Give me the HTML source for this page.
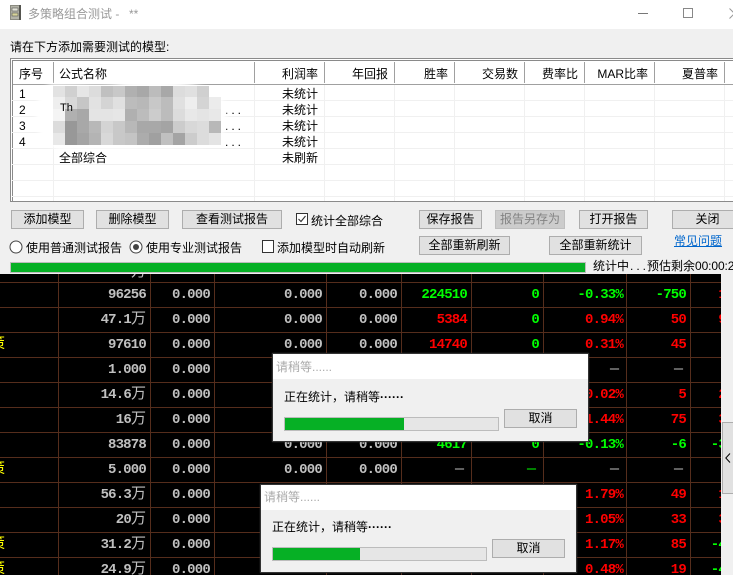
<!DOCTYPE html>
<html lang="zh">
<head>
<meta charset="utf-8">
<title>多策略组合测试</title>
<style>
html,body{margin:0;padding:0;width:733px;height:575px;overflow:hidden;background:#f0f0f0;}
body{position:relative;font-family:"Liberation Sans","WenQuanYi Zen Hei","Noto Sans CJK SC",sans-serif;font-size:12px;color:#000;}
.a{position:absolute;}
.t{position:absolute;white-space:nowrap;line-height:16px;height:16px;}
.b{position:absolute;box-sizing:border-box;height:19px;background:#e1e1e1;border:1px solid #adadad;text-align:center;line-height:17px;white-space:nowrap;overflow:hidden;}
#black{position:absolute;left:0;top:274px;width:721px;height:301px;background:#000;overflow:hidden;}
.v{position:absolute;top:0;width:1px;height:301px;background:#552d1c;}
.h{position:absolute;left:0;width:721px;height:1px;background:#552d1c;}
.r{position:absolute;left:0;width:733px;height:20px;margin-top:1px;font:bold 14px/20px "Liberation Mono","WenQuanYi Zen Hei",monospace;letter-spacing:-.8px;color:#c0c0c0;}
.r span{position:absolute;top:0;white-space:nowrap;}
.r i{font:normal 15px/0 "WenQuanYi Zen Hei","Noto Sans CJK SC",sans-serif;letter-spacing:0;}
.r .n{font-weight:normal;letter-spacing:0;font-size:15px;}
.c1{right:587px}.c2{right:523px}.c3{right:411px}.c4{right:336px}.c5{right:266px}.c6{right:194px}.c7{right:110px}.c8{right:47px}.c9{right:7px}
.g{color:#00ff00}.d{color:#ff0000}
.hd{position:absolute;top:66px;white-space:nowrap;line-height:16px;text-align:right;}
.sep{position:absolute;top:62px;height:21px;width:1px;background:#a0a0a0;}
.cl{position:absolute;top:85px;height:116px;width:1px;background:#f0f0f0;}
.rl{position:absolute;left:12px;width:721px;height:1px;background:#f0f0f0;}
.dlg{position:absolute;box-sizing:border-box;width:317px;height:89px;border:1px solid #333;background:#f0f0f0;box-shadow:0 0 1px #444;}
.dlg .tb{position:absolute;left:0;top:0;width:315px;height:25px;background:#fff;}
.pb{position:absolute;box-sizing:border-box;width:215px;height:14px;background:#e6e6e6;border:1px solid #bcbcbc;}
.pb div{height:12px;background:#06b025;}
</style>
</head>
<body>

<div id="black">
  <div class="v" style="left:58px"></div>
  <div class="v" style="left:150px"></div>
  <div class="v" style="left:214px"></div>
  <div class="v" style="left:326px"></div>
  <div class="v" style="left:401px"></div>
  <div class="v" style="left:471px"></div>
  <div class="v" style="left:543px"></div>
  <div class="v" style="left:626px"></div>
  <div class="v" style="left:690px"></div>
  <div class="h" style="top:8px"></div>
  <div class="h" style="top:33px"></div>
  <div class="h" style="top:58px"></div>
  <div class="h" style="top:83px"></div>
  <div class="h" style="top:108px"></div>
  <div class="h" style="top:133px"></div>
  <div class="h" style="top:158px"></div>
  <div class="h" style="top:183px"></div>
  <div class="h" style="top:208px"></div>
  <div class="h" style="top:233px"></div>
  <div class="h" style="top:258px"></div>
  <div class="h" style="top:283px"></div>

  <div class="r" style="top:-12px"><span class="c1"><i>万</i></span></div>
  <div class="r" style="top:10px"><span class="c1">96256</span><span class="c2">0.000</span><span class="c3">0.000</span><span class="c4">0.000</span><span class="c5 g">224510</span><span class="c6 g">0</span><span class="c7 g">-0.33%</span><span class="c8 g">-750</span><span class="c9 d">1</span></div>
  <div class="r" style="top:35px"><span class="c1">47.1<i>万</i></span><span class="c2">0.000</span><span class="c3">0.000</span><span class="c4">0.000</span><span class="c5 d">5384</span><span class="c6 g">0</span><span class="c7 d">0.94%</span><span class="c8 d">50</span><span class="c9 d">9</span></div>
  <div class="r" style="top:60px"><span style="left:-10px;color:#ff0"><i>策</i></span><span class="c1">97610</span><span class="c2">0.000</span><span class="c3">0.000</span><span class="c4">0.000</span><span class="c5 d">14740</span><span class="c6 g">0</span><span class="c7 d">0.31%</span><span class="c8 d">45</span></div>
  <div class="r" style="top:85px"><span class="c1">1.000</span><span class="c2">0.000</span><span class="c3">0.000</span><span class="n" style="right:114px">—</span><span class="n" style="right:50px">—</span></div>
  <div class="r" style="top:110px"><span class="c1">14.6<i>万</i></span><span class="c2">0.000</span><span class="c3">0.000</span><span class="c7 d">0.02%</span><span class="c8 d">5</span><span class="c9 d">2</span></div>
  <div class="r" style="top:135px"><span class="c1">16<i>万</i></span><span class="c2">0.000</span><span class="c3">0.000</span><span class="c7 d">1.44%</span><span class="c8 d">75</span><span class="c9 d">3</span></div>
  <div class="r" style="top:160px"><span class="c1">83878</span><span class="c2">0.000</span><span class="c3">0.000</span><span class="c4">0.000</span><span class="c5 g">4617</span><span class="c6 g">0</span><span class="c7 g">-0.13%</span><span class="c8 g">-6</span><span class="c9 g">-3</span></div>
  <div class="r" style="top:185px"><span style="left:-10px;color:#ff0"><i>策</i></span><span class="c1">5.000</span><span class="c2">0.000</span><span class="c3">0.000</span><span class="c4">0.000</span><span class="n" style="right:269px">—</span><span class="n g" style="right:197px">—</span><span class="n" style="right:114px">—</span><span class="n" style="right:50px">—</span></div>
  <div class="r" style="top:210px"><span class="c1">56.3<i>万</i></span><span class="c2">0.000</span><span class="c3">0.000</span><span class="c7 d">1.79%</span><span class="c8 d">49</span><span class="c9 d">1</span></div>
  <div class="r" style="top:235px"><span class="c1">20<i>万</i></span><span class="c2">0.000</span><span class="c3">0.000</span><span class="c7 d">1.05%</span><span class="c8 d">33</span><span class="c9 d">3</span></div>
  <div class="r" style="top:260px"><span style="left:-10px;color:#ff0"><i>策</i></span><span class="c1">31.2<i>万</i></span><span class="c2">0.000</span><span class="c3">0.000</span><span class="c7 d">1.17%</span><span class="c8 d">85</span><span class="c9 g">-4</span></div>
  <div class="r" style="top:285px"><span style="left:-10px;color:#ff0"><i>策</i></span><span class="c1">24.9<i>万</i></span><span class="c2">0.000</span><span class="c3">0.000</span><span class="c4">0.000</span><span class="c5 d">4884</span><span class="c6 g">0</span><span class="c7 d">0.48%</span><span class="c8 d">19</span><span class="c9 g">-4</span></div>
</div>

<!-- collapse handle -->
<div class="a" style="left:722px;top:422px;width:11px;height:72px;box-sizing:border-box;background:#e1e1e1;border:1px solid #adadad;border-right:0;"></div>
<svg class="a" style="left:725px;top:453px" width="6" height="10" viewBox="0 0 6 10"><path d="M5 .5L.8 5 5 9.5" fill="none" stroke="#000" stroke-width="1"/></svg>

<!-- main window -->
<div class="a" style="left:0;top:0;width:733px;height:274px;background:#f0f0f0;"></div>
<div class="a" style="left:0;top:0;width:733px;height:29px;background:#fff;"></div>

<svg class="a" style="left:9px;top:5px" width="13" height="15" viewBox="0 0 13 15">
  <rect x="1" y="0" width="11" height="15" fill="#8a8a80"/>
  <rect x="2" y="1" width="8" height="13" fill="#b4b4a8"/>
  <rect x="3" y="3" width="6" height="3" fill="#e4e4d8" stroke="#555" stroke-width=".6"/>
  <rect x="3" y="8" width="6" height="3" fill="#d8d49a" stroke="#555" stroke-width=".6"/>
  <rect x="10" y="0" width="2" height="15" fill="#55554f"/>
</svg>
<div class="t" style="left:28px;top:6px;color:#999">多策略组合测试 -</div>
<div class="t" style="left:129px;top:6px;color:#999">**</div>

<div class="a" style="left:638px;top:13px;width:10px;height:1px;background:#777"></div>
<div class="a" style="left:683px;top:8px;width:10px;height:10px;box-sizing:border-box;border:1px solid #888;"></div>
<svg class="a" style="left:729px;top:8px" width="4" height="11" viewBox="0 0 4 11"><path d="M.5 .5L5.5 5.5M.5 10.5L5.5 5.5" fill="none" stroke="#999" stroke-width="1"/></svg>

<div class="t" style="left:10px;top:39px">请在下方添加需要测试的模型:</div>

<!-- list frame -->
<div class="a" style="left:10px;top:58px;width:723px;height:144px;box-sizing:border-box;border:1px solid #8a8a8a;border-right:0;background:#fff;"></div>
<div class="a" style="left:12px;top:60px;width:721px;height:1px;background:#8a8a8a;"></div>
<div class="a" style="left:12px;top:60px;width:1px;height:141px;background:#8a8a8a;"></div>
<div class="a" style="left:13px;top:84px;width:720px;height:1px;background:#a0a0a0;"></div>

<div class="sep" style="left:53px"></div>
<div class="sep" style="left:254px"></div>
<div class="sep" style="left:324px"></div>
<div class="sep" style="left:394px"></div>
<div class="sep" style="left:454px"></div>
<div class="sep" style="left:524px"></div>
<div class="sep" style="left:584px"></div>
<div class="sep" style="left:654px"></div>
<div class="sep" style="left:724px"></div>

<div class="cl" style="left:53px"></div>
<div class="cl" style="left:254px"></div>
<div class="cl" style="left:324px"></div>
<div class="cl" style="left:394px"></div>
<div class="cl" style="left:454px"></div>
<div class="cl" style="left:524px"></div>
<div class="cl" style="left:584px"></div>
<div class="cl" style="left:654px"></div>
<div class="cl" style="left:724px"></div>

<div class="rl" style="top:100px"></div>
<div class="rl" style="top:116px"></div>
<div class="rl" style="top:132px"></div>
<div class="rl" style="top:148px"></div>
<div class="rl" style="top:164px"></div>
<div class="rl" style="top:180px"></div>
<div class="rl" style="top:196px"></div>

<div class="hd" style="left:19px">序号</div>
<div class="hd" style="left:59px">公式名称</div>
<div class="hd" style="right:415px">利润率</div>
<div class="hd" style="right:345px">年回报</div>
<div class="hd" style="right:285px">胜率</div>
<div class="hd" style="right:215px">交易数</div>
<div class="hd" style="right:155px">费率比</div>
<div class="hd" style="right:85px">MAR比率</div>
<div class="hd" style="right:15px">夏普率</div>

<div class="t" style="left:19px;top:86px">1</div>
<div class="t" style="left:19px;top:102px">2</div>
<div class="t" style="left:19px;top:118px">3</div>
<div class="t" style="left:19px;top:134px">4</div>
<div class="t" style="left:225px;top:102px;letter-spacing:3px">...</div>
<div class="t" style="left:225px;top:118px;letter-spacing:3px">...</div>
<div class="t" style="left:225px;top:134px;letter-spacing:3px">...</div>
<div class="t" style="left:59px;top:150px">全部综合</div>
<div class="t" style="left:282px;top:86px">未统计</div>
<div class="t" style="left:282px;top:102px">未统计</div>
<div class="t" style="left:282px;top:118px">未统计</div>
<div class="t" style="left:282px;top:134px">未统计</div>
<div class="t" style="left:282px;top:150px">未刷新</div>

<!-- mosaic -->
<svg class="a" style="left:28px;top:72px" width="207" height="85" viewBox="28 72 207 85">
  <defs><filter id="bl" x="-20%" y="-40%" width="140%" height="180%"><feGaussianBlur stdDeviation="2"/></filter></defs>
  <path d="M52 84C90 84 100 88 125 82C160 78 190 82 205 88C220 92 226 100 226 118C226 134 220 146 190 147C150 149 100 148 70 150C50 151 38 140 36 120C35 100 42 86 52 84Z" fill="#fff" filter="url(#bl)"/>
  <g shape-rendering="crispEdges">
    <rect x="53" y="86" width="12" height="11" fill="#e2e2e2"/><rect x="65" y="86" width="12" height="11" fill="#d0d0d0"/><rect x="77" y="86" width="12" height="11" fill="#e6e6e6"/><rect x="89" y="86" width="12" height="11" fill="#dcdcdc"/><rect x="101" y="86" width="12" height="11" fill="#c0c0c0"/><rect x="113" y="86" width="12" height="11" fill="#c8c8c8"/><rect x="125" y="86" width="12" height="11" fill="#b0b0b0"/><rect x="137" y="86" width="12" height="11" fill="#a8a8a8"/><rect x="149" y="86" width="12" height="11" fill="#bcbcbc"/><rect x="161" y="86" width="12" height="11" fill="#a8a8a8"/><rect x="173" y="86" width="12" height="11" fill="#dcdcdc"/><rect x="185" y="86" width="12" height="11" fill="#e0e0e0"/><rect x="197" y="86" width="12" height="11" fill="#d0d0d0"/>
    <rect x="53" y="97" width="12" height="12" fill="#eeeeee"/><rect x="65" y="97" width="12" height="12" fill="#d8d8d8"/><rect x="77" y="97" width="12" height="12" fill="#c6c6c6"/><rect x="89" y="97" width="12" height="12" fill="#e2e2e2"/><rect x="101" y="97" width="12" height="12" fill="#d4d4d4"/><rect x="113" y="97" width="12" height="12" fill="#e0e0e0"/><rect x="125" y="97" width="12" height="12" fill="#bcbcbc"/><rect x="137" y="97" width="12" height="12" fill="#b8b8b8"/><rect x="149" y="97" width="12" height="12" fill="#c8c8c8"/><rect x="161" y="97" width="12" height="12" fill="#bcbcbc"/><rect x="173" y="97" width="12" height="12" fill="#e0e0e0"/><rect x="185" y="97" width="12" height="12" fill="#eeeeee"/><rect x="197" y="97" width="12" height="12" fill="#d4d4d4"/><rect x="209" y="97" width="12" height="12" fill="#ececec"/>
    <rect x="53" y="109" width="12" height="12" fill="#f4f4f4"/><rect x="65" y="109" width="12" height="12" fill="#b0b0b0"/><rect x="77" y="109" width="12" height="12" fill="#a8a8a8"/><rect x="89" y="109" width="12" height="12" fill="#e4e4e4"/><rect x="101" y="109" width="12" height="12" fill="#e4e4e4"/><rect x="113" y="109" width="12" height="12" fill="#e6e6e6"/><rect x="125" y="109" width="12" height="12" fill="#b0b0b0"/><rect x="137" y="109" width="12" height="12" fill="#bcbcbc"/><rect x="149" y="109" width="12" height="12" fill="#cccccc"/><rect x="161" y="109" width="12" height="12" fill="#bcbcbc"/><rect x="173" y="109" width="12" height="12" fill="#dcdcdc"/><rect x="185" y="109" width="12" height="12" fill="#e8e8e8"/><rect x="197" y="109" width="12" height="12" fill="#e4e4e4"/><rect x="209" y="109" width="12" height="12" fill="#e8e8e8"/>
    <rect x="53" y="121" width="12" height="12" fill="#dcdcdc"/><rect x="65" y="121" width="12" height="12" fill="#989898"/><rect x="77" y="121" width="12" height="12" fill="#a8a8a8"/><rect x="89" y="121" width="12" height="12" fill="#b8b8b8"/><rect x="101" y="121" width="12" height="12" fill="#d4d4d4"/><rect x="113" y="121" width="12" height="12" fill="#c8c8c8"/><rect x="125" y="121" width="12" height="12" fill="#b8b8b8"/><rect x="137" y="121" width="12" height="12" fill="#a8a8a8"/><rect x="149" y="121" width="12" height="12" fill="#a8a8a8"/><rect x="161" y="121" width="12" height="12" fill="#a4a4a4"/><rect x="173" y="121" width="12" height="12" fill="#cccccc"/><rect x="185" y="121" width="12" height="12" fill="#d8d8d8"/><rect x="197" y="121" width="12" height="12" fill="#dcdcdc"/><rect x="209" y="121" width="12" height="12" fill="#b8b8b8"/>
    <rect x="53" y="133" width="12" height="12" fill="#e8e8e8"/><rect x="65" y="133" width="12" height="12" fill="#989898"/><rect x="77" y="133" width="12" height="12" fill="#a4a4a4"/><rect x="89" y="133" width="12" height="12" fill="#b4b4b4"/><rect x="101" y="133" width="12" height="12" fill="#d8d8d8"/><rect x="113" y="133" width="12" height="12" fill="#c8c8c8"/><rect x="125" y="133" width="12" height="12" fill="#c4c4c4"/><rect x="137" y="133" width="12" height="12" fill="#acacac"/><rect x="149" y="133" width="12" height="12" fill="#a0a0a0"/><rect x="161" y="133" width="12" height="12" fill="#c0c0c0"/><rect x="173" y="133" width="12" height="12" fill="#a4a4a4"/><rect x="185" y="133" width="12" height="12" fill="#cccccc"/><rect x="197" y="133" width="12" height="12" fill="#dcdcdc"/><rect x="209" y="133" width="12" height="12" fill="#e4e4e4"/>
  </g>
</svg>
<div class="t" style="left:60px;top:100px;font-size:11px;clip-path:inset(0 0 3px 0)">Th</div>

<!-- toolbar -->
<div class="b" style="left:11px;top:210px;width:73px">添加模型</div>
<div class="b" style="left:96px;top:210px;width:73px">删除模型</div>
<div class="b" style="left:182px;top:210px;width:100px">查看测试报告</div>
<div class="a" style="left:296px;top:213px;width:12px;height:12px;box-sizing:border-box;border:1px solid #333;background:#fff"></div>
<svg class="a" style="left:296px;top:213px" width="12" height="12" viewBox="0 0 12 12"><path d="M2.5 6L5 8.5 9.5 3" fill="none" stroke="#333" stroke-width="1.1"/></svg>
<div class="t" style="left:311px;top:213px">统计全部综合</div>
<div class="b" style="left:419px;top:210px;width:63px">保存报告</div>
<div class="b" style="left:495px;top:210px;width:70px;background:#ccc;border-color:#bfbfbf;color:#838383">报告另存为</div>
<div class="b" style="left:579px;top:210px;width:69px">打开报告</div>
<div class="b" style="left:672px;top:210px;width:70px;border-right:0">关闭</div>

<svg class="a" style="left:9px;top:240px" width="15" height="15" viewBox="0 0 15 15"><circle cx="7" cy="7" r="6" fill="#fff" stroke="#444"/></svg>
<div class="t" style="left:26px;top:240px">使用普通测试报告</div>
<svg class="a" style="left:129px;top:240px" width="15" height="15" viewBox="0 0 15 15"><circle cx="7" cy="7" r="6" fill="#fff" stroke="#444"/><circle cx="7" cy="7" r="3" fill="#444"/></svg>
<div class="t" style="left:146px;top:240px">使用专业测试报告</div>
<div class="a" style="left:262px;top:240px;width:12px;height:13px;box-sizing:border-box;border:1px solid #333;background:#fff"></div>
<div class="t" style="left:277px;top:240px">添加模型时自动刷新</div>
<div class="b" style="left:419px;top:236px;width:91px">全部重新刷新</div>
<div class="b" style="left:549px;top:236px;width:93px">全部重新统计</div>
<div class="t" style="left:674px;top:233px;color:#0066cc;text-decoration:underline">常见问题</div>

<div class="a" style="left:10px;top:262px;width:576px;height:11px;box-sizing:border-box;border:1px solid #bcbcbc;background:#06b025"></div>
<div class="t" style="left:593px;top:258px">统计中</div>
<div class="t" style="left:630px;top:258px;letter-spacing:3px">...</div>
<div class="t" style="left:647px;top:258px">预估剩余</div>
<div class="t" style="left:695px;top:258px;letter-spacing:-.1px;width:38px;overflow:hidden">00:00:2</div>

<!-- dialog 1 -->
<div class="dlg" style="left:272px;top:353px;width:317px">
  <div class="tb"></div>
  <div class="t" style="left:3px;top:5px;color:#aaa">请稍等......</div>
  <div class="t" style="left:11px;top:35px">正在统计，请稍等<b>······</b></div>
  <div class="pb" style="left:11px;top:63px"><div style="width:119px"></div></div>
  <div class="b" style="left:231px;top:55px;width:73px">取消</div>
</div>
<!-- dialog 2 -->
<div class="dlg" style="left:260px;top:484px;width:317px">
  <div class="tb"></div>
  <div class="t" style="left:3px;top:4px;color:#aaa">请稍等......</div>
  <div class="t" style="left:11px;top:34px">正在统计，请稍等<b>······</b></div>
  <div class="pb" style="left:11px;top:62px"><div style="width:87px"></div></div>
  <div class="b" style="left:231px;top:54px;width:73px">取消</div>
</div>
</body>
</html>
